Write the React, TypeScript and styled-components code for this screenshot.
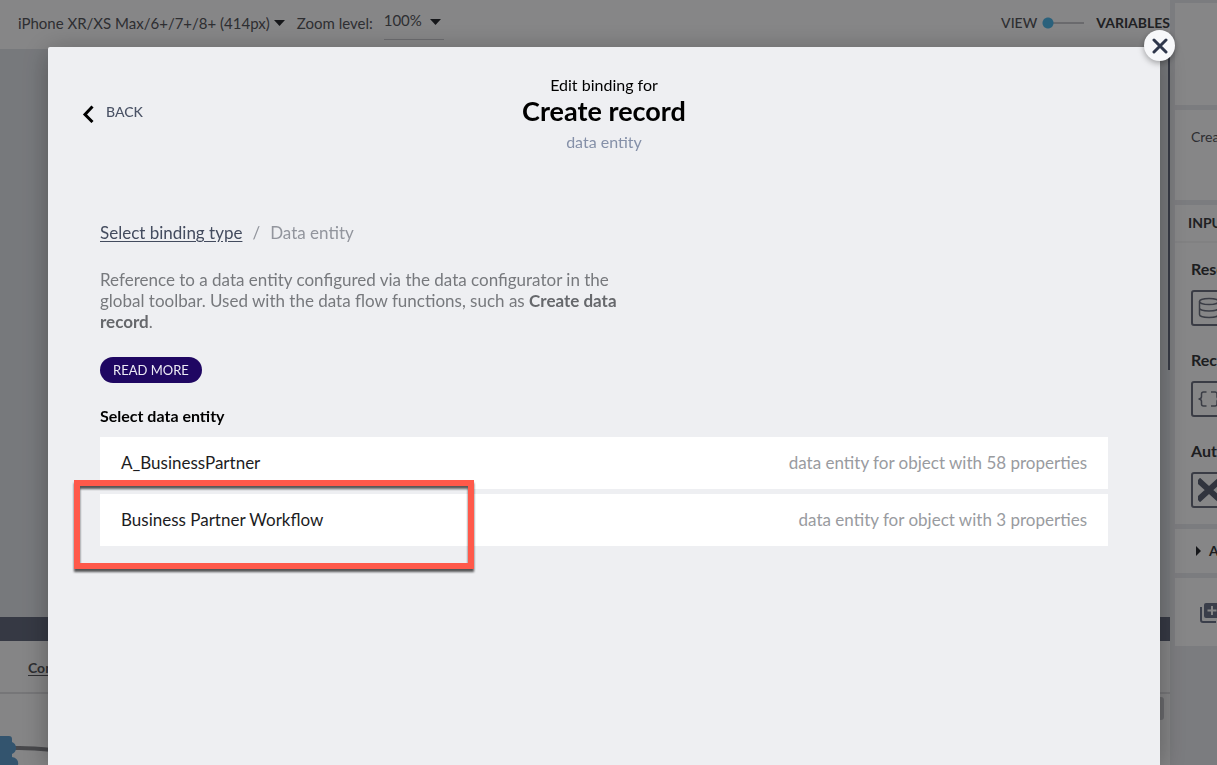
import React from "react";
import styled, { createGlobalStyle } from "styled-components";

const GlobalStyle = createGlobalStyle`
  *, *::before, *::after { box-sizing: border-box; }
  body {
    margin: 0;
    overflow: hidden;
    background: #e6e7ec;
    color: #000;
    font-family: Lato, "Open Sans", sans-serif;
    font-size: 16px;
    line-height: 20px;
  }
  button, input, select { font: inherit; color: inherit; }
  button { border: 0; padding: 0; background: none; cursor: pointer; }
  h1, h2, p, ul { margin: 0; padding: 0; }
`;

/* Editor behind the dialog */

const Editor = styled.div`
  display: grid;
  grid-template-columns: minmax(0, 1fr) 47px;
  height: 100vh;
  overflow: hidden;
  color: #55565c;
`;

const Workspace = styled.main`
  display: flex;
  flex-direction: column;
  min-width: 0;
`;

const Toolbar = styled.div`
  display: flex;
  align-items: center;
  flex: none;
  height: 49px;
  padding: 0 0 3px 18px;
  gap: 12px;
  background: #f8f8fa;
  font-size: 15px;
`;

const DeviceButton = styled.button`
  display: flex;
  align-items: center;
  gap: 4px;
  white-space: nowrap;
`;

const ZoomField = styled.div`
  display: flex;
  align-items: center;
  gap: 11px;
`;

const SelectBox = styled.div`
  display: flex;
  align-items: center;
  width: 60px;
  height: 34px;
  padding-bottom: 6px;
  border-bottom: 1px solid #c9c9ce;

  select {
    appearance: none;
    width: 46px;
    padding: 0;
    border: 0;
    background: none;
  }
  svg { margin-top: 4px; }
`;

const Caret = styled.svg`
  flex: none;
  width: 11px;
  height: 6px;
  fill: #2a2b30;
`;

const ModeSwitch = styled.label`
  display: flex;
  align-items: center;
  margin-left: auto;
  font-size: 14px;
  font-weight: 500;

  input {
    appearance: none;
    width: 42px;
    height: 12px;
    margin: 0 12px 0 5px;
    background:
      radial-gradient(circle at 6px 6px, #4fb4e6 5px, transparent 6px),
      linear-gradient(#c5c5ca, #c5c5ca) 10px 5px / 32px 2px no-repeat;
  }
  strong { color: #3c3d42; font-weight: 700; }
`;

const Canvas = styled.section`
  display: flex;
  flex: 1;
  justify-content: flex-end;
  min-height: 0;
  background: #dde0e6;
`;

const ScrollThumb = styled.div`
  width: 2px;
  height: 321px;
  background: #646a7e;
`;

const LogicPanel = styled.section`
  display: flex;
  flex-direction: column;
  flex: none;
  height: 148px;
  border-top: 24px solid #646a7e;
  background: #f5f5f7;
`;

const PanelHeader = styled.div`
  flex: none;
  height: 53px;
  padding: 17px 28px;
  border-bottom: 2px solid #dadade;
  font-size: 14px;

  a { color: inherit; font-weight: 700; text-underline-offset: 2px; }
`;

const FlowArea = styled.div`
  display: flex;
  flex: 1;
  justify-content: space-between;
  align-items: flex-start;
`;

const FlowDrawing = styled.svg`
  width: 100px;
  height: 71px;
`;

const FlowScroll = styled.div`
  width: 7px;
  height: 23px;
  margin: 3px 6px 0 0;
  border-radius: 3px;
  background: #c4c5ca;
`;

const Sidebar = styled.aside`
  display: flex;
  flex-direction: column;
  gap: 5px;
  padding: 3px 0 0 5px;
  overflow: hidden;
  background: #e4e5ea;
`;

const Card = styled.section<{ $height: number }>`
  flex: none;
  height: ${(p) => p.$height}px;
  overflow: hidden;
  background: #f8f8fa;
  white-space: nowrap;
`;

const CardTitle = styled.p`
  padding: 17px 16px;
  font-size: 14px;
`;

const CardHeading = styled.h2`
  height: 38px;
  padding: 8px 13px;
  border-bottom: 2px solid #eeeef1;
  color: #3c3d42;
  font-size: 14px;
  line-height: 20px;
  font-weight: 700;
`;

const Property = styled.div`
  display: flex;
  flex-direction: column;
  height: 91px;
  padding: 16px 0 0 16px;
  gap: 11px;
  color: #37383c;
  font-weight: 700;
`;

const BindingButton = styled.button`
  flex: none;
  width: 60px;
  height: 36px;
  padding: 4px 5px;
  border: 2px solid #6c7080;
  border-radius: 3px;
  text-align: left;

  svg { display: block; }
`;

const Disclosure = styled.button`
  display: flex;
  align-items: center;
  gap: 8px;
  height: 44px;
  padding-left: 21px;
  color: #37383c;
  font-size: 14px;
  font-weight: 700;
`;

const AddButton = styled.button`
  padding: 25px;
`;

/* Dialog */

const Backdrop = styled.div`
  position: fixed;
  inset: 0;
  padding: 47px 57px 0 48px;
  background: rgba(0, 0, 0, 0.46);
`;

const Dialog = styled.div`
  position: relative;
  height: 100%;
  padding: 28px 52px 0;
  border-radius: 2px 2px 0 0;
  background: #eeeff2;
  box-shadow: 0 4px 28px rgba(0, 0, 0, 0.3);
`;

const CloseButton = styled.button`
  position: absolute;
  top: -17px;
  right: -15px;
  display: grid;
  place-items: center;
  width: 31px;
  height: 31px;
  border-radius: 50%;
  background: #f7f8fa;
  box-shadow: 0 2px 6px rgba(0, 0, 0, 0.35);
`;

const DialogHeader = styled.header`
  display: grid;
  grid-template-columns: 1fr auto 1fr;
  align-items: center;
  margin: 0 -18px 71px;
  text-align: center;
`;

const BackButton = styled.button`
  display: flex;
  align-items: center;
  justify-self: start;
  gap: 12px;
  color: #4b5366;
  font-size: 14px;
  font-weight: 500;

  span { padding-bottom: 4px; }
`;

const Title = styled.h1`
  font-size: 27px;
  line-height: 32px;
  font-weight: 700;
`;

const Subtitle = styled.p`
  margin-top: 5px;
  color: #8590a8;
`;

const Breadcrumb = styled.nav`
  display: flex;
  gap: 10px;
  margin-bottom: 26px;
  color: #92959d;
  font-size: 17px;

  a { color: #434b5e; text-underline-offset: 2px; }
`;

const Description = styled.p`
  max-width: 530px;
  margin-bottom: 25px;
  color: #77797d;
  font-size: 17px;
  line-height: 21px;

  strong { color: #66686c; font-weight: 700; }
`;

const ReadMore = styled.button`
  display: block;
  height: 26px;
  padding: 0 13px;
  border-radius: 13px;
  background: #1f0762;
  color: #eceaf4;
  font-size: 13px;
`;

const ListHeading = styled.h2`
  margin: 23px 0 11px;
  font-size: 16px;
  line-height: 20px;
  font-weight: 700;
`;

const EntityList = styled.ul`
  display: flex;
  flex-direction: column;
  gap: 5px;
  list-style: none;
`;

const EntityItem = styled.li`
  position: relative;
`;

const EntityButton = styled.button`
  display: flex;
  align-items: center;
  justify-content: space-between;
  width: 100%;
  height: 52px;
  padding: 0 21px;
  background: #fff;
  color: #1c1c1e;
  font-size: 17px;

  small { color: #999ba0; font-size: 17px; }
`;

const Highlight = styled.div`
  position: absolute;
  top: -14px;
  left: -26px;
  width: 400px;
  height: 89px;
  border: 6px solid #ff594a;
  filter: drop-shadow(0 3px 1px rgba(0, 0, 0, 0.65));
  pointer-events: none;
`;

const DownCaret = () => (
  <Caret viewBox="0 0 11 6" aria-hidden="true">
    <path d="M0 0h11L5.500 6z" />
  </Caret>
);

const DatabaseIcon = () => (
  <svg width="24" height="24" viewBox="0 0 24 24" fill="none" stroke="#6c7080" strokeWidth="1.500">
    <ellipse cx="11" cy="5.500" rx="9.500" ry="3" />
    <path d="M1.500 5.500v13c0 1.700 4.200 3 9.500 3s9.500-1.300 9.500-3v-13M1.500 12c0 1.700 4.200 3 9.500 3s9.500-1.300 9.500-3" />
  </svg>
);

const BracesIcon = () => (
  <svg width="28" height="24" viewBox="0 0 28 24" fill="none" stroke="#6c7080" strokeWidth="1.500">
    <path d="M8.500 5H5.500Q3.500 5 3.500 7v2.500Q3.500 12 .5 12q3 0 3 2.500V17q0 2 2 2h3M13 5h4q2 0 2 2v2.500q0 2.500 3 2.500-3 0-3 2.500V17q0 2-2 2h-4" />
  </svg>
);

const CrossIcon = () => (
  <svg width="26" height="24" viewBox="0 0 26 24" fill="none" stroke="#5b6173" strokeWidth="6">
    <path d="M0 2l22 20M22 2L0 22" />
  </svg>
);

const entities = [
  { name: "A_BusinessPartner", properties: 58 },
  { name: "Business Partner Workflow", properties: 3, highlighted: true },
];

const inputs = [
  { label: "Resource name", icon: <DatabaseIcon /> },
  { label: "Record", icon: <BracesIcon /> },
  { label: "Authentication", icon: <CrossIcon /> },
];

export default function App() {
  return (
    <>
      <GlobalStyle />
      <Editor>
        <Workspace>
          <Toolbar>
            <DeviceButton>
              iPhone XR/XS Max/6+/7+/8+ (414px)
              <DownCaret />
            </DeviceButton>
            <ZoomField>
              <label htmlFor="zoom">Zoom level:</label>
              <SelectBox>
                <select id="zoom" defaultValue="100%">
                  <option>100%</option>
                </select>
                <DownCaret />
              </SelectBox>
            </ZoomField>
            <ModeSwitch>
              VIEW
              <input type="checkbox" role="switch" />
              <strong>VARIABLES</strong>
            </ModeSwitch>
          </Toolbar>
          <Canvas>
            <ScrollThumb />
          </Canvas>
          <LogicPanel>
            <PanelHeader>
              <a href="#component">Component</a>
            </PanelHeader>
            <FlowArea>
              <FlowDrawing viewBox="0 0 100 71" aria-hidden="true">
                <path d="M15 54C32 53 48 56 100 60" fill="none" stroke="#85868c" strokeWidth="4" />
                <path
                  d="M0 42h9q3 0 3 3v3a6.500 6.500 0 0 1 0 12v3a6.500 6.500 0 0 1 6 8H0z"
                  fill="#5f9ccc"
                />
              </FlowDrawing>
              <FlowScroll />
            </FlowArea>
          </LogicPanel>
        </Workspace>

        <Sidebar>
          <Card $height={102} />
          <Card $height={90}>
            <CardTitle>Create record</CardTitle>
          </Card>
          <Card $height={319}>
            <CardHeading>INPUTS</CardHeading>
            {inputs.map((input) => (
              <Property key={input.label}>
                {input.label}
                <BindingButton aria-label={input.label}>{input.icon}</BindingButton>
              </Property>
            ))}
          </Card>
          <Card $height={44}>
            <Disclosure>
              <svg width="5" height="10" viewBox="0 0 5 10" fill="#2a2b30">
                <path d="M0 0l5 5-5 5z" />
              </svg>
              ADVANCED
            </Disclosure>
          </Card>
          <Card $height={68}>
            <AddButton aria-label="Add">
              <svg width="20" height="20" viewBox="0 0 20 20">
                <path d="M1 4v13q0 2 2 2h13" fill="none" stroke="#6c7389" strokeWidth="2" />
                <rect x="4" y="0" width="16" height="15" rx="2" fill="#6c7389" />
                <path d="M12 3v9M7.500 7.500h9" stroke="#f8f8fa" strokeWidth="2" />
              </svg>
            </AddButton>
          </Card>
        </Sidebar>
      </Editor>

      <Backdrop>
        <Dialog role="dialog" aria-modal="true" aria-labelledby="dialog-title">
          <CloseButton aria-label="Close">
            <svg width="16" height="16" viewBox="0 0 16 16" stroke="#2f374b" strokeWidth="3" strokeLinecap="round">
              <path d="M2 2l12 12M14 2L2 14" />
            </svg>
          </CloseButton>
          <DialogHeader>
            <BackButton>
              <svg width="12" height="18" viewBox="0 0 12 18" fill="none" stroke="#000" strokeWidth="3">
                <path d="M10.500 1.500L3 9.500l7.500 7.500" />
              </svg>
              <span>BACK</span>
            </BackButton>
            <div>
              <p>Edit binding for</p>
              <Title id="dialog-title">Create record</Title>
              <Subtitle>data entity</Subtitle>
            </div>
          </DialogHeader>

          <Breadcrumb aria-label="Breadcrumb">
            <a href="#binding-type">Select binding type</a>
            <span>/</span>
            <span>Data entity</span>
          </Breadcrumb>
          <Description>
            Reference to a data entity configured via the data configurator in the global toolbar.
            Used with the data flow functions, such as <strong>Create data record</strong>.
          </Description>
          <ReadMore>READ MORE</ReadMore>

          <ListHeading>Select data entity</ListHeading>
          <EntityList>
            {entities.map((entity) => (
              <EntityItem key={entity.name}>
                <EntityButton>
                  {entity.name}
                  <small>data entity for object with {entity.properties} properties</small>
                </EntityButton>
                {entity.highlighted && <Highlight />}
              </EntityItem>
            ))}
          </EntityList>
        </Dialog>
      </Backdrop>
    </>
  );
}
